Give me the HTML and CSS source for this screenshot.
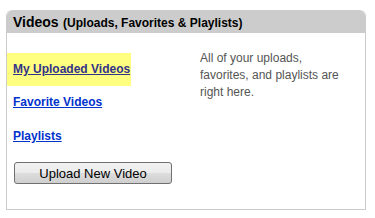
FILE: index.html
```html
<!DOCTYPE html>
<html lang="en">
<head>
  <meta charset="UTF-8">
  <title>Videos</title>
  <link rel="stylesheet" href="styles.css">
</head>
<body>
  <div class="box">
    <div class="box_head">
      <span class="title">Videos</span> <span class="sub">(Uploads, Favorites &amp; Playlists)</span>
    </div>
    <div class="box_body">
      <div class="links">
        <div class="link hl"><a class="visited" href="#">My Uploaded Videos</a></div>
        <div class="link"><a href="#">Favorite Videos</a></div>
        <div class="link"><a href="#">Playlists</a></div>
        <button class="upload">Upload New Video</button>
      </div>
      <p class="blurb">All of your uploads, favorites, and playlists are right here.</p>
    </div>
  </div>
</body>
</html>
```

FILE: styles.css
```css
body {
  margin: 0;
  padding: 10px 9px 0 6px;
  background: #fff;
  font-family: "Liberation Sans", Arial, sans-serif;
}

.box {
  border: 1px solid #ccc;
  border-top: none;
  border-radius: 6px 6px 0 0;
  height: 200px;
  box-sizing: border-box;
}

.box_head {
  background: #ccc;
  height: 23px;
  padding: 0 0 0 6px;
  border-radius: 6px 6px 0 0;
  line-height: 23px;
  color: #000;
  font-weight: bold;
}

.title { font-size: 14px; }
.sub { font-size: 12px; }

.box_body {
  display: flex;
  padding-top: 20px;
}

.links {
  width: 193px;
}

.link {
  height: 31px;
  padding-left: 6px;
  font-size: 12px;
  font-weight: bold;
  line-height: 31px;
  margin-bottom: 3px;
}

.link.hl {
  background: #ffff80;
  width: 118px;
  height: 33px;
  line-height: 32px;
  margin-bottom: 1px;
}

.link a {
  color: #0033cc;
}

.link a.visited {
  color: #333388;
}

.upload {
  margin: 7px 0 0 7px;
  width: 158px;
  height: 22px;
  font-family: "Liberation Sans", Arial, sans-serif;
  font-size: 13px;
  color: #000;
  border: 1px solid #707070;
  border-radius: 3px;
  background: linear-gradient(#f2f2f2 0%, #ebebeb 50%, #dddddd 51%, #cfcfcf 100%);
  padding: 0;
}

.blurb {
  margin: -3px 0 0 0;
  width: 140px;
  font-size: 12px;
  line-height: 17px;
  color: #555;
}
```
